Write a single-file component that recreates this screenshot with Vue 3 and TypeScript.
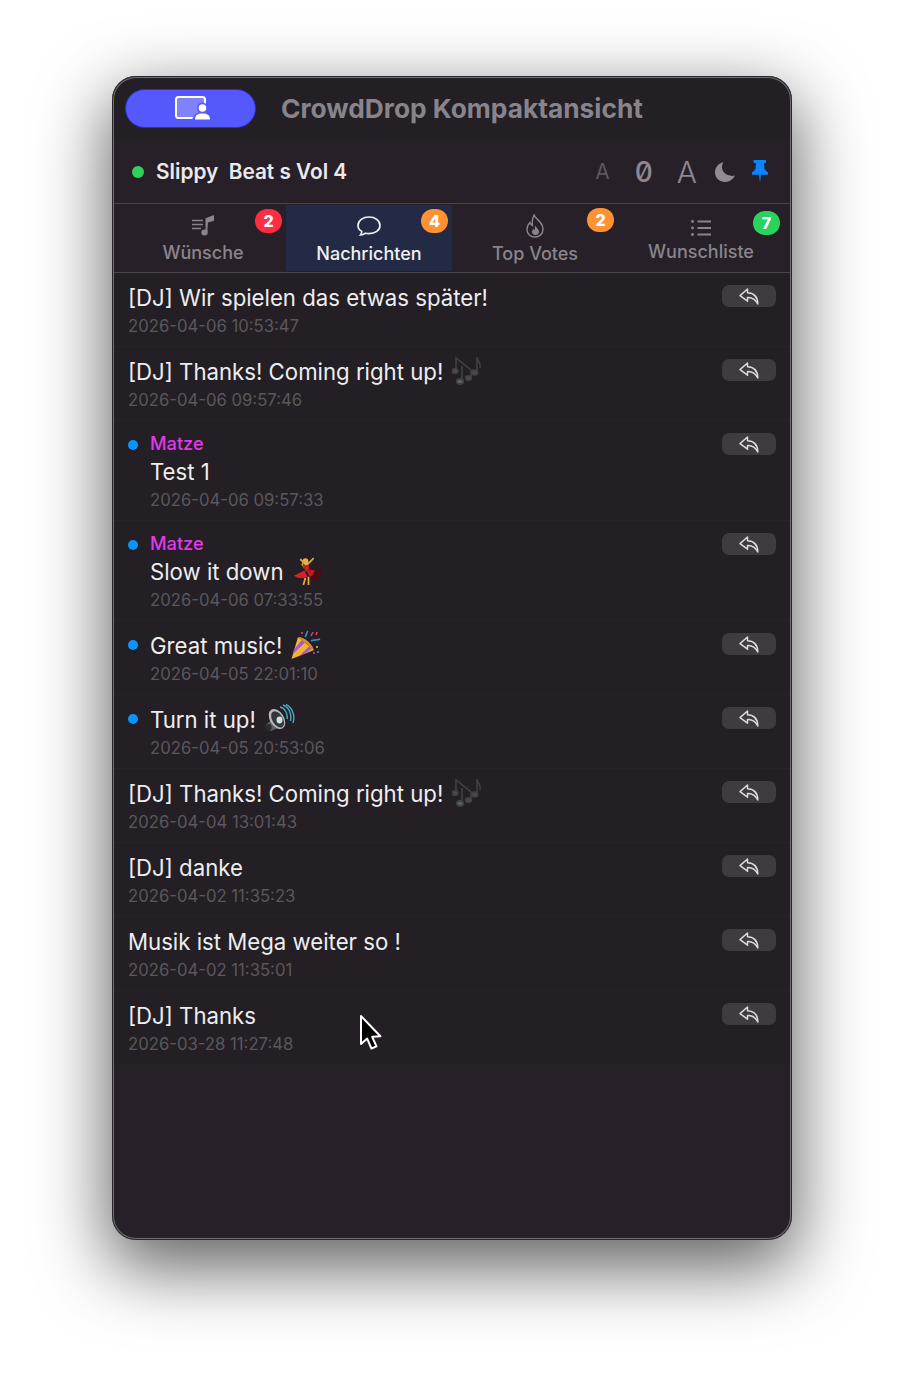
<script setup lang="ts">
interface Msg {
  id: number
  text: string
  time: string
  name?: string
  dot?: boolean
  emoji?: 'notes' | 'dancer' | 'party' | 'speaker'
}
interface Tab {
  key: string
  label: string
  badge: number
  color: string
}
const eventName = 'Slippy\u00a0\u00a0Beat s Vol 4'
const tabs: Tab[] = [
  { key: 'wishes', label: 'Wünsche', badge: 2, color: 'red' },
  { key: 'messages', label: 'Nachrichten', badge: 4, color: 'orange' },
  { key: 'votes', label: 'Top Votes', badge: 2, color: 'orange' },
  { key: 'list', label: 'Wunschliste', badge: 7, color: 'green' },
]
const messages: Msg[] = [
  { id: 1, text: '[DJ] Wir spielen das etwas später!', time: '2026-04-06 10:53:47' },
  { id: 2, text: '[DJ] Thanks! Coming right up!', time: '2026-04-06 09:57:46', emoji: 'notes' },
  { id: 3, name: 'Matze', dot: true, text: 'Test 1', time: '2026-04-06 09:57:33' },
  { id: 4, name: 'Matze', dot: true, text: 'Slow it down', time: '2026-04-06 07:33:55', emoji: 'dancer' },
  { id: 5, dot: true, text: 'Great music!', time: '2026-04-05 22:01:10', emoji: 'party' },
  { id: 6, dot: true, text: 'Turn it up!', time: '2026-04-05 20:53:06', emoji: 'speaker' },
  { id: 7, text: '[DJ] Thanks! Coming right up!', time: '2026-04-04 13:01:43', emoji: 'notes' },
  { id: 8, text: '[DJ] danke', time: '2026-04-02 11:35:23' },
  { id: 9, text: 'Musik ist Mega weiter so !', time: '2026-04-02 11:35:01' },
  { id: 10, text: '[DJ] Thanks', time: '2026-03-28 11:27:48' },
]
</script>

<template>
  <div class="page">
    <main class="window">
      <header class="titlebar">
        <button class="logo-btn" aria-label="Ansicht">
          <svg width="38" height="26" viewBox="0 0 38 26">
            <rect x="2" y="2" width="29" height="21" rx="2.5" fill="#7f82fb" stroke="#fff" stroke-width="2" />
            <path d="M20 25 a9 9 0 0 1 17 0 z" fill="#5558fb" stroke="#5558fb" stroke-width="4" />
            <circle cx="28.5" cy="13" r="5.5" fill="#5558fb" />
            <circle cx="28.5" cy="13" r="3.8" fill="#fff" />
            <path d="M21 24.5 C21 20 24 18.5 28.5 18.5 S36 20 36 24.5 Z" fill="#fff" />
          </svg>
        </button>
        <h1 class="app-title">CrowdDrop Kompaktansicht</h1>
      </header>

      <section class="toolbar">
        <span class="status-dot"></span>
        <span class="event-name">{{ eventName }}</span>
        <div class="controls">
          <span class="font-small">A</span>
          <span class="font-value">0</span>
          <span class="font-large">A</span>
          <svg class="moon" width="22" height="22" viewBox="0 0 22 22">
            <path d="M9.5 1.2 C4.5 2.2 1 6.4 1 11.2 C1 17 5.6 21 11 21 C15.4 21 19 18.6 20.8 14.6 C14.5 16 8.2 12 8 6.6 C8 4.4 8.4 2.8 9.5 1.2 Z" fill="#918b95" />
          </svg>
          <svg class="pin" width="16" height="23" viewBox="0 0 16 23">
            <path d="M1.5 0 H14 V2.6 L12 3.6 L12.6 9.4 L16 12.4 V14.8 H9 L8 23 L7 14.8 H0 V12.4 L3.4 9.4 L4 3.6 L1.5 2.6 Z" fill="#0a84ff" />
          </svg>
        </div>
      </section>

      <nav class="tabs">
        <div
          v-for="t in tabs"
          :key="t.key"
          class="tab"
          :class="['tab-' + t.key, { active: t.key === 'messages' }]"
        >
          <svg v-if="t.key === 'wishes'" class="tab-icon" width="26" height="24" viewBox="0 0 26 24" fill="none" stroke="#8a858c">
            <path d="M2 6.5 H13 M2 10.5 H13 M2 14.5 H11" stroke-width="1.6" />
            <path d="M16.5 18 V5 L23 2.5 V6 L18 7.5" stroke-width="2" fill="#8a858c" />
            <ellipse cx="14.5" cy="18.5" rx="3.2" ry="3" fill="#8a858c" stroke="none" />
          </svg>
          <svg v-else-if="t.key === 'messages'" class="tab-icon" width="26" height="24" viewBox="0 0 26 24" fill="none" stroke="#f0eff1" stroke-width="1.7">
            <path d="M13 3 C19 3 24 6.4 24 11.4 C24 16.4 19 19.6 13 19.6 C11.6 19.6 10.5 19.5 9.5 19.2 C8 20.4 6.2 21 4.5 21 C5.4 20 5.9 18.8 5.7 17.4 C3.4 15.9 2 13.8 2 11.4 C2 6.4 7 3 13 3 Z" />
          </svg>
          <svg v-else-if="t.key === 'votes'" class="tab-icon" width="26" height="24" viewBox="0 0 26 24" fill="none" stroke="#8a858c" stroke-width="1.4">
            <path d="M12 1 C13 5 21 7.5 21 15 C21 20 17.5 23 13 23 C8.5 23 5 20 5 15.5 C5 12.5 6.5 10 8 8.5 C8.5 10 9 11 10.5 11.5 C10 8 10.5 4 12 1 Z" />
            <path d="M13.5 11.5 C14 14 17 15 17 18 C17 20 15.4 21 13.5 21 C11.6 21 10 20 10 18 C10 16.4 11 15.5 11.7 15 C12 15.7 12.3 16 12.8 16.2 C12.6 14.6 12.8 13 13.5 11.5 Z" fill="#8a858c" stroke="none" />
          </svg>
          <svg v-else class="tab-icon" width="26" height="24" viewBox="0 0 26 24" fill="#8a858c" stroke="#8a858c">
            <path d="M9.5 5.5 H23 M9.5 12 H23 M9.5 18.5 H23" stroke-width="1.8" fill="none" />
            <circle cx="4.5" cy="5.5" r="1.4" stroke="none" />
            <circle cx="4.5" cy="12" r="1.4" stroke="none" />
            <circle cx="4.5" cy="18.5" r="1.4" stroke="none" />
          </svg>
          <span class="tab-label">{{ t.label }}</span>
          <span class="badge" :class="'badge-' + t.color">{{ t.badge }}</span>
        </div>
      </nav>

      <ul class="list">
        <li v-for="m in messages" :key="m.id" class="row">
          <span class="unread" :class="{ on: m.dot }"></span>
          <div class="body" :class="{ indented: m.dot }">
            <div v-if="m.name" class="sender">{{ m.name }}</div>
            <div class="text">
              <span>{{ m.text }}</span>
              <svg v-if="m.emoji === 'notes'" class="emoji" width="30" height="30" viewBox="0 0 30 30" fill="#39383d" stroke="#3f4046" stroke-width="1.6">
                <path d="M4 14 V2 L19 14 V22" fill="none" />
                <path d="M10 10 V24" fill="none" />
                <ellipse cx="3" cy="15" rx="3" ry="2.3" fill="#4a4c52" />
                <ellipse cx="16.5" cy="22" rx="3" ry="2.3" fill="#4a4c52" />
                <ellipse cx="8" cy="25.5" rx="3.4" ry="2.6" fill="#5c5f66" />
                <path d="M25 1 V16 M25 1 C25 5 29.5 6 28 12" fill="none" />
                <ellipse cx="22.5" cy="16.5" rx="3.2" ry="2.4" fill="#4a4c52" />
              </svg>
              <svg v-else-if="m.emoji === 'dancer'" class="emoji" width="30" height="30" viewBox="1 0 27 29">
                <path d="M10 28 L12 21 M15 28 L15 20" stroke="#e8a93a" stroke-width="1.7" fill="none" />
                <path d="M13 9 L7 3 M13 9 L20 2" stroke="#e8a93a" stroke-width="1.7" fill="none" />
                <circle cx="12" cy="5" r="2.8" fill="#e8b040" />
                <path d="M12 3 C9 6 10 11 11 13 L8 8 Z" fill="#d99a20" />
                <path d="M10 9 H15 L16 14 L12 15 Z" fill="#c8202a" />
                <path d="M11 14 C7 16 3 18 1 19 C5 22 10 22 14 20 Z" fill="#d8202a" />
                <path d="M13 14 C18 12 24 12 27 13 C28 18 26 23 21 25 C18 22 15 19 13 14 Z" fill="#4a0c14" />
                <path d="M13 14 C16 13 19 13 21 14 C20 18 18 20 16 20 Z" fill="#b81c26" />
              </svg>
              <svg v-else-if="m.emoji === 'party'" class="emoji" width="30" height="30" viewBox="0 0 30 30">
                <path d="M0.5 29 L7 7 L23 20 Z" fill="#f0b62c" />
                <path d="M3 19.5 L11 10 L14 12.5 L2 24 Z M7 27 L18 16.5 L21 19 L11 25 Z" fill="#a855d8" />
                <path d="M7 7 L23 20 C21 14 14 7 7 7 Z" fill="#d9912a" />
                <path d="M14 7 C16 5 15 3 17 1 M20 11 C23 9 26 11 29 9" stroke="#2f8fe8" stroke-width="1.6" fill="none" />
                <path d="M20 6 L22 2 M25 5 L26 2" stroke="#e83a6a" stroke-width="1.6" fill="none" />
                <circle cx="26" cy="17" r="1.1" fill="#f0b62c" /><circle cx="23" cy="23" r="1.1" fill="#e83a6a" />
                <circle cx="27" cy="22" r="1.1" fill="#2f8fe8" /><circle cx="11" cy="3" r="1.1" fill="#e83a6a" />
              </svg>
              <svg v-else-if="m.emoji === 'speaker'" class="emoji" width="30" height="30" viewBox="0 0 30 30">
                <path d="M6 16 L1 21 C0 24 3 28 6 27 L13 24 Z" fill="#5d6065" />
                <ellipse cx="3.8" cy="23.5" rx="2.8" ry="3.4" fill="#2a2b2e" />
                <ellipse cx="12" cy="15" rx="7" ry="11" transform="rotate(-32 12 15)" fill="#b4b8bc" />
                <ellipse cx="12.6" cy="15.4" rx="5.2" ry="9" transform="rotate(-32 12.6 15.4)" fill="#34363a" />
                <ellipse cx="14.5" cy="16" rx="3" ry="3.4" fill="#cfe0e6" />
                <path d="M15 3 C20 4 23 10 22 15 M18 1 C24 3 27 10 25.5 17 M21 0.5 C27 3 30.5 11 28 19" stroke="#4aa9bd" stroke-width="1.4" fill="none" />
              </svg>
            </div>
            <div class="time">{{ m.time }}</div>
          </div>
          <button class="reply" aria-label="Antworten">
            <svg width="20" height="17" viewBox="0 0 20 17" fill="none" stroke="#dcdadd" stroke-width="1.5" stroke-linejoin="round">
              <path d="M8.5 1 L1 7.6 L8.5 13.2 V9.6 C12.8 9.3 16.2 11 18.8 16 C18.8 9.4 15 5.2 8.5 4.8 Z" />
            </svg>
          </button>
        </li>
      </ul>

      <svg class="cursor" width="26" height="40" viewBox="0 0 26 40">
        <path d="M3 3 V31 L9.2 25.6 L13.4 35.5 L18.5 33.4 L14.2 23.8 L22.4 23.2 Z" fill="#000" stroke="#fff" stroke-width="2" stroke-linejoin="round" />
      </svg>
    </main>
  </div>
</template>

<style scoped>
.page {
  width: 904px;
  height: 1388px;
  box-sizing: border-box;
  padding: 76px 112px 148px;
  background: #fff;
  overflow: hidden;
}
.window {
  position: relative;
  height: 1164px;
  box-sizing: border-box;
  border-radius: 24px;
  overflow: hidden;
  background: #282029;
  display: flex;
  flex-direction: column;
  font-family: Inter, "Liberation Sans", sans-serif;
  box-shadow: 0 24px 70px 4px rgba(0, 0, 0, 0.62);
}
.window::after {
  content: "";
  position: absolute;
  inset: 0;
  border-radius: 24px;
  pointer-events: none;
  box-shadow: inset 0 0 0 1px #2a282c, inset 0 0 0 2px #6e6b72;
}
.titlebar {
  height: 64px;
  flex: none;
  display: flex;
  align-items: center;
  padding-left: 13px;
  gap: 25px;
  background: #231f24;
}
.logo-btn {
  width: 131px;
  height: 39px;
  box-sizing: border-box;
  border: 1px solid #2a2dcf;
  border-radius: 20px;
  background: #5558fb;
  display: flex;
  align-items: center;
  justify-content: center;
  padding: 0 0 0 4px;
}
.app-title {
  margin: 0;
  font-size: 26.3px;
  font-weight: 700;
  color: #89848c;
}
.toolbar {
  height: 63px;
  flex: none;
  display: flex;
  align-items: center;
  padding: 0 24px 0 20px;
  background: #272029;
  border-bottom: 1px solid #4a454d;
  box-sizing: content-box;
}
.status-dot {
  width: 12px;
  height: 12px;
  border-radius: 50%;
  background: #30d158;
  margin-right: 12px;
}
.event-name {
  font-size: 20.8px;
  font-weight: 600;
  color: #ebe9ec;
}
.controls {
  margin-left: auto;
  display: flex;
  align-items: center;
  color: #8d8890;
}
.font-small {
  font-size: 21px;
  color: #5d5860;
  margin-right: 25px;
}
.font-value {
  font-family: Inter, sans-serif;
  font-feature-settings: "zero";
  font-variant-numeric: slashed-zero;
  font-size: 28px;
  font-weight: 500;
  margin-right: 24px;
}
.font-large {
  font-size: 30px;
  font-weight: 300;
  margin-right: 17px;
}
.moon {
  margin-right: 16px;
}
.tabs {
  height: 68px;
  flex: none;
  display: grid;
  grid-template-columns: repeat(4, 166px);
  padding: 0 8px;
  background: #272029;
  border-bottom: 1px solid #4a454d;
}
.tab {
  position: relative;
  display: flex;
  flex-direction: column;
  align-items: center;
  justify-content: center;
  padding-top: 2px;
  gap: 4px;
  color: #8a858c;
  font-size: 18px;
  font-weight: 500;
}
.tab.active {
  margin: 1px 0;
  background: #222a45;
  color: #f0eff1;
}
.tab.active .tab-label {
  margin-top: 1px;
}
.tab-icon {
  margin-top: -1px;
}
.tab-votes .tab-label {
  margin-top: 1px;
}
.tab-list .tab-label {
  margin-top: -3px;
}
.badge {
  position: absolute;
  top: 5px;
  right: 4px;
  width: 27px;
  height: 24px;
  border-radius: 12px;
  display: flex;
  align-items: center;
  justify-content: center;
  color: #fff;
  font-size: 16px;
  font-weight: 800;
}
.active .badge {
  top: 4px;
}
.tab-votes .badge {
  top: 4px;
}
.tab-list .badge {
  top: 7px;
}
.badge-red { background: #ff2d42; }
.badge-orange { background: #ff9233; }
.badge-green { background: #2ad35d; }
.list {
  margin: 0;
  padding: 0;
  list-style: none;
  background: #231f24;
}
.row {
  position: relative;
  display: flex;
  align-items: flex-start;
  padding: 12px 16px 9px;
  border-bottom: 1px solid #272328;
}
.row:last-child {
  border-bottom-color: transparent;
}
.unread {
  display: none;
}
.unread.on {
  display: block;
  position: absolute;
  left: 16px;
  top: 19px;
  width: 10px;
  height: 10px;
  border-radius: 50%;
  background: #0a94ff;
}
.body {
  flex: 1;
  min-width: 0;
}
.body.indented {
  padding-left: 22px;
}
.sender {
  height: 20px;
  line-height: 21px;
  margin-bottom: 6px;
  font-size: 18.2px;
  font-weight: 500;
  color: #e338ee;
}
.text {
  display: flex;
  align-items: center;
  gap: 9px;
  height: 26px;
  line-height: 26px;
  font-size: 22.2px;
  font-weight: 400;
  color: #eeedef;
}
.emoji {
  flex: none;
  margin-top: -2px;
}
.time {
  margin-top: 4px;
  height: 22px;
  line-height: 22px;
  font-size: 16.7px;
  color: #5b575d;
}
.reply {
  flex: none;
  width: 54px;
  height: 22px;
  padding: 0;
  border: 0;
  border-radius: 7px;
  background: #3f3b41;
  display: flex;
  align-items: center;
  justify-content: center;
}
.cursor {
  position: absolute;
  left: 246px;
  top: 937px;
}
</style>
